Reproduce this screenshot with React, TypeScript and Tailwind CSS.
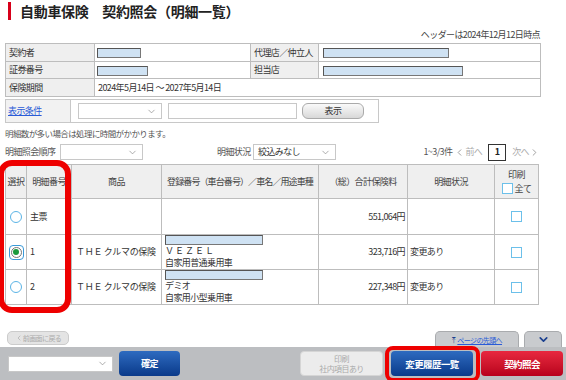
import { ChevronDown, ChevronLeft, ChevronRight } from "lucide-react";

const font = { fontFamily: '"Noto Sans CJK JP", "Noto Sans", sans-serif' };

function Mask({ w }: { w: number }) {
  return (
    <span
      className="inline-block h-[10px] border border-[#555] border-r-[#777] border-b-[#777] bg-[#cfe2f3] align-middle"
      style={{ width: w }}
    />
  );
}

function Select({ w, label = "" }: { w: number; label?: string }) {
  return (
    <div
      className="flex h-[16px] items-center justify-between border border-[#c8c8c8] bg-white pl-[4px] pr-[4px] text-[#333]"
      style={{ width: w }}
    >
      <span>{label}</span>
      <ChevronDown size={11} strokeWidth={1.5} className="text-[#888]" />
    </div>
  );
}

function Radio({ on }: { on?: boolean }) {
  if (on)
    return (
      <span className="flex h-[15px] w-[15px] items-center justify-center rounded-[4px] border-[1.5px] border-[#3a9ad9]">
        <span className="flex h-[11px] w-[11px] items-center justify-center rounded-full border border-[#777] bg-white">
          <span className="h-[6px] w-[6px] rounded-full bg-[#1a9a3c]" />
        </span>
      </span>
    );
  return <span className="block h-[12px] w-[12px] rounded-full border-[1.5px] border-[#5bb4e6] bg-white" />;
}

function Check() {
  return <span className="block h-[11px] w-[11px] border-[1.5px] border-[#6cc0ea] bg-white" />;
}

const th = "border border-[#bdbdbd] bg-[#efefef] font-normal text-[#444] whitespace-nowrap";
const td = "border border-[#bdbdbd] align-middle whitespace-nowrap";

export default function App() {
  return (
    <div
      className="relative flex h-[380px] w-[566px] flex-col overflow-hidden bg-white text-[9px] leading-[12px] tracking-[-0.6px] text-[#333]"
      style={font}
    >
      {/* title */}
      <div className="flex items-center pl-[8px] pt-[2px]">
        <span className="h-[18px] w-[3px] bg-[#d7001a]" />
        <span className="ml-[9px] text-[14px] font-bold leading-[18px] tracking-[-0.3px] text-[#222]">
          自動車保険　契約照会（明細一覧）
        </span>
      </div>
      <div className="mt-[9px] pr-[26px] text-right leading-[12px] text-[#444]">
        ヘッダーは2024年12月12日時点
      </div>

      {/* contract info */}
      <table className="ml-[5px] mt-[2px] w-[536px] table-fixed border-collapse">
        <colgroup>
          <col className="w-[89px]" />
          <col className="w-[156px]" />
          <col className="w-[68px]" />
          <col />
        </colgroup>
        <tbody>
          <tr className="h-[18px]">
            <td className={`${td} bg-[#efefef] pl-[3px]`}>契約者</td>
            <td className={`${td} pl-[2px]`}><Mask w={44} /></td>
            <td className={`${td} bg-[#efefef] pl-[3px]`}>代理店／仲立人</td>
            <td className={`${td} pl-[4px]`}><Mask w={126} /></td>
          </tr>
          <tr className="h-[17px]">
            <td className={`${td} bg-[#efefef] pl-[3px]`}>証券番号</td>
            <td className={`${td} pl-[2px]`}><Mask w={51} /></td>
            <td className={`${td} bg-[#efefef] pl-[3px]`}>担当店</td>
            <td className={`${td} pl-[4px]`}><Mask w={140} /></td>
          </tr>
          <tr className="h-[18px]">
            <td className={`${td} bg-[#efefef] pl-[3px]`}>保険期間</td>
            <td className={`${td} pl-[3px]`} colSpan={3}>2024年5月14日 ～ 2027年5月14日</td>
          </tr>
        </tbody>
      </table>

      {/* filter */}
      <div className="ml-[5px] mt-[2px] flex h-[24px] w-[374px] border border-[#c8c8c8]">
        <div className="flex w-[65px] items-center border-r border-[#c8c8c8] bg-[#f2f2f2] pl-[2px]">
          <span className="text-[#2a5bd7] underline">表示条件</span>
        </div>
        <div className="flex items-center pl-[7px]">
          <Select w={84} />
          <div className="ml-[6px] h-[16px] w-[129px] border border-[#c8c8c8] bg-white" />
          <button className="ml-[5px] h-[16px] w-[62px] rounded-[6px] border border-[#aaa] bg-gradient-to-b from-[#fafafa] to-[#d8d8d8] text-[9px] text-[#333]">
            表示
          </button>
        </div>
      </div>

      <div className="ml-[5px] mt-[4px] text-[8.5px] leading-[12px] text-[#555]">
        明細数が多い場合は処理に時間がかかります。
      </div>

      {/* sort row */}
      <div className="ml-[5px] mt-[4px] flex h-[18px] w-[535px] items-center">
        <span className="w-[55px] text-[#555]">明細照会順序</span>
        <Select w={83} />
        <span className="ml-[74px] w-[36px] text-[#555]">明細状況</span>
        <Select w={83} label="絞込みなし" />
        <div className="ml-auto flex items-center text-[#555]">
          <span>1~3/3件</span>
          <ChevronLeft size={11} className="ml-[2px] text-[#999]" />
          <span className="text-[#aaa]">前へ</span>
          <span className="ml-[6px] flex h-[17px] w-[18px] items-center justify-center border-[1.5px] border-[#333] bg-white font-bold text-[#222]">
            1
          </span>
          <span className="ml-[6px] text-[#aaa]">次へ</span>
          <ChevronRight size={11} className="text-[#999]" />
        </div>
      </div>

      {/* detail table */}
      <table className="ml-[5px] mt-[3px] w-[534px] table-fixed border-collapse">
        <colgroup>
          <col className="w-[21px]" />
          <col className="w-[45px]" />
          <col className="w-[90px]" />
          <col className="w-[157px]" />
          <col className="w-[89px]" />
          <col className="w-[87px]" />
          <col />
        </colgroup>
        <thead>
          <tr className="h-[34px]">
            <th className={th}>選択</th>
            <th className={th}>明細番号</th>
            <th className={th}>商品</th>
            <th className={`${th} tracking-[-0.9px]`}>登録番号（車台番号）／車名／用途車種</th>
            <th className={th}>（総）合計保険料</th>
            <th className={th}>明細状況</th>
            <th className={th}>
              <div className="flex flex-col items-center leading-[12px]">
                <span>印刷</span>
                <span className="mt-[2px] flex items-center gap-[2px]">
                  <Check />
                  全て
                </span>
              </div>
            </th>
          </tr>
        </thead>
        <tbody>
          <tr className="h-[36px]">
            <td className={td}><div className="flex justify-center"><Radio /></div></td>
            <td className={`${td} pl-[3px]`}>主票</td>
            <td className={td} />
            <td className={td} />
            <td className={`${td} pr-[2px] text-right`}>551,064円</td>
            <td className={td} />
            <td className={td}><div className="flex justify-center"><Check /></div></td>
          </tr>
          <tr className="h-[35px]">
            <td className={td}><div className="flex justify-center"><Radio on /></div></td>
            <td className={`${td} pl-[3px]`}>1</td>
            <td className={`${td} pl-[4px] tracking-[-0.3px]`}>ＴＨＥ クルマの保険</td>
            <td className={`${td} pl-[3px] leading-[12px]`}>
              <div className="h-[10px] leading-[0]"><Mask w={98} /></div>
              <div className="tracking-[1px]">ＶＥＺＥＬ</div>
              <div>自家用普通乗用車</div>
            </td>
            <td className={`${td} pr-[2px] text-right`}>323,716円</td>
            <td className={`${td} pl-[2px]`}>変更あり</td>
            <td className={td}><div className="flex justify-center"><Check /></div></td>
          </tr>
          <tr className="h-[35px]">
            <td className={td}><div className="flex justify-center"><Radio /></div></td>
            <td className={`${td} pl-[3px]`}>2</td>
            <td className={`${td} pl-[4px] tracking-[-0.3px]`}>ＴＨＥ クルマの保険</td>
            <td className={`${td} pl-[3px] leading-[12px]`}>
              <div className="h-[10px] leading-[0]"><Mask w={98} /></div>
              <div>デミオ</div>
              <div>自家用小型乗用車</div>
            </td>
            <td className={`${td} pr-[2px] text-right`}>227,348円</td>
            <td className={`${td} pl-[2px]`}>変更あり</td>
            <td className={td}><div className="flex justify-center"><Check /></div></td>
          </tr>
        </tbody>
      </table>

      {/* back + tabs + footer */}
      <div className="mt-auto">
        <div className="flex h-[16px] items-end">
          <div className="mb-[2px] ml-[7px] flex h-[14px] w-[62px] items-center justify-center rounded-[5px] border border-[#ccc] bg-[#e4e4e4] text-[7px] text-[#aaa]">
            <ChevronLeft size={8} />
            前画面に戻る
          </div>
          <div className="ml-auto flex h-[16px] w-[84px] items-center justify-center rounded-t-[5px] border border-b-0 border-[#a9abae] bg-[#c9cbce] text-[7px]">
            <span className="mr-[2px] text-[8px] leading-none text-[#1a3f8f]">⤒</span>
            <span className="text-[#2a5bd7] underline">ページの先頭へ</span>
          </div>
          <div className="ml-[5px] mr-[4px] flex h-[16px] w-[38px] items-center justify-center rounded-t-[5px] border border-b-0 border-[#a9abae] bg-[#c9cbce]">
            <ChevronDown size={13} strokeWidth={3} className="text-[#1a3f8f]" />
          </div>
        </div>

        <div className="flex h-[33px] items-center bg-[#bcbec1]">
          <div className="ml-[8px]">
            <Select w={105} />
          </div>
          <button className="ml-[6px] h-[25px] w-[61px] rounded-[4px] bg-gradient-to-b from-[#2e6bc0] to-[#0a3a8a] text-[9px] font-bold text-white">
            確定
          </button>
          <button className="ml-[120px] flex h-[25px] w-[83px] flex-col items-center justify-center rounded-[4px] border border-[#d5d5d5] bg-[#ececec] text-[8px] leading-[10px] text-[#aaa]">
            <span>印刷</span>
            <span>社内項目あり</span>
          </button>
          <button className="ml-[8px] h-[25px] w-[82px] rounded-[4px] bg-gradient-to-b from-[#2e6bc0] to-[#0a3a8a] text-[9.5px] font-bold text-white">
            変更履歴一覧
          </button>
          <button className="ml-[8px] h-[25px] w-[82px] rounded-[4px] bg-gradient-to-b from-[#e8273f] to-[#b8001c] text-[9.5px] font-bold text-white">
            契約照会
          </button>
        </div>
      </div>

      {/* highlight overlays */}
      <div className="pointer-events-none absolute left-[-2px] top-[160px] h-[153px] w-[73px] rounded-[14px] border-[6px] border-[#ee0000]" />
      <div className="pointer-events-none absolute left-[385px] top-[346px] h-[36px] w-[95px] rounded-[8px] border-[4px] border-[#ee0000]" />
    </div>
  );
}
